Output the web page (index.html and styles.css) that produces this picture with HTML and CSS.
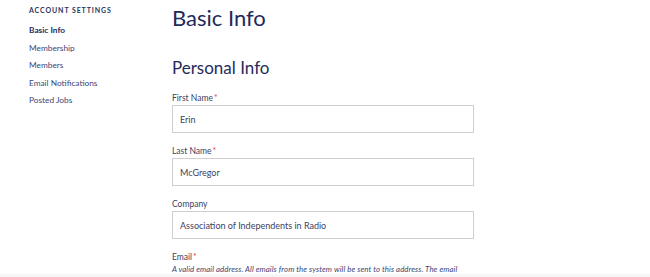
FILE: index.html
```html
<!DOCTYPE html>
<html lang="en">
<head>
    <meta charset="UTF-8">
    <meta name="viewport" content="width=device-width, initial-scale=1.0">
    <title>Basic Info</title>
    <link rel="stylesheet" href="styles.css">
</head>
<body>
    <div class="page">
        <aside class="sidebar">
            <h3 class="sidebar-title">Account Settings</h3>
            <ul class="side-nav">
                <li><a href="#" class="active">Basic Info</a></li>
                <li><a href="#">Membership</a></li>
                <li><a href="#">Members</a></li>
                <li><a href="#">Email Notifications</a></li>
                <li><a href="#">Posted Jobs</a></li>
            </ul>
        </aside>
        <main class="content">
            <h1>Basic Info</h1>
            <h2>Personal Info</h2>
            <div class="field">
                <label for="firstName">First Name<span class="req">*</span></label>
                <input type="text" id="firstName" value="Erin">
            </div>
            <div class="field">
                <label for="lastName">Last Name<span class="req">*</span></label>
                <input type="text" id="lastName" value="McGregor">
            </div>
            <div class="field">
                <label for="company">Company</label>
                <input type="text" id="company" value="Association of Independents in Radio">
            </div>
            <div class="field">
                <label for="email">Email<span class="req">*</span></label>
                <p class="help">A valid email address. All emails from the system will be sent to this address. The email address is not made public and will only be used if you wish to receive a new password or</p>
            </div>
        </main>
    </div>
    <div class="fade"></div>
</body>
</html>
```

FILE: styles.css
```css
body {
    font-family: Lato, "Open Sans", sans-serif;
    margin: 0;
    background-color: #fff;
    color: #1f2b5b;
    overflow: hidden;
}
.page {
    display: flex;
    padding: 0 0 0 29px;
}
.sidebar {
    width: 143px;
    flex-shrink: 0;
}
.sidebar-title {
    margin: 6px 0 3px;
    font-size: 7px;
    line-height: 9px;
    font-weight: 700;
    letter-spacing: 0.9px;
    text-transform: uppercase;
    color: #2a3560;
}
.side-nav {
    list-style: none;
    margin: 0;
    padding: 0;
}
.side-nav li {
    height: 17.5px;
    line-height: 17.5px;
}
.side-nav a {
    font-size: 8.3px;
    color: #3b4676;
    text-decoration: none;
}
.side-nav a.active {
    font-weight: 700;
    color: #1f2b5b;
}
.content {
    width: 302px;
}
h1 {
    margin: 5px 0 0;
    font-size: 22px;
    font-weight: 400;
    line-height: 26px;
    color: #1f2b5b;
}
h2 {
    margin: 27px 0 15px;
    font-size: 17px;
    font-weight: 400;
    line-height: 20px;
    color: #1f2b5b;
}
.field {
    margin-bottom: 13px;
}
.field label {
    display: block;
    font-size: 8.5px;
    line-height: 11px;
    color: #3b4263;
    margin-bottom: 1px;
}
.req {
    color: #e2453b;
    margin-left: 1px;
}
.field input {
    display: block;
    box-sizing: border-box;
    width: 302px;
    height: 28px;
    padding: 0 7px;
    border: 1px solid #cfcfcf;
    font-family: inherit;
    font-size: 9px;
    color: #3b4263;
}
.help {
    margin: 0;
    font-size: 7.8px;
    line-height: 11px;
    letter-spacing: 0.1px;
    font-style: italic;
    color: #3b4676;
}
.fade {
    position: fixed;
    left: 0;
    right: 0;
    bottom: 0;
    height: 3px;
    background: rgba(240, 240, 240, 0.6);
}
```
